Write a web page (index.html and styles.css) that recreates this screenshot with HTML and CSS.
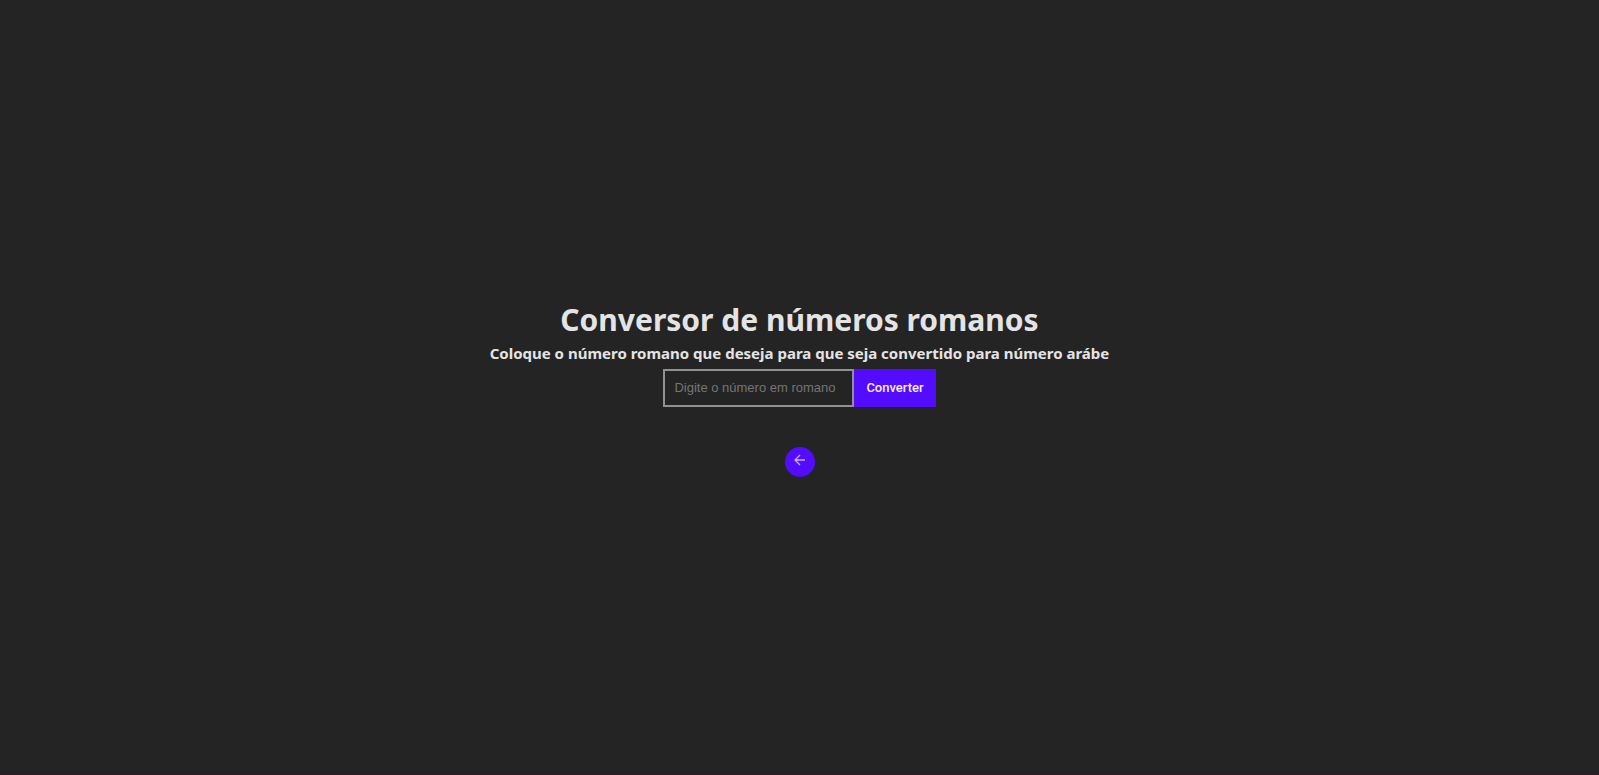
FILE: index.html
```html
<!DOCTYPE html>
<html lang="pt-BR">
<head>
<meta charset="utf-8">
<meta name="viewport" content="width=device-width, initial-scale=1">
<title>Conversor de números romanos</title>
<link rel="stylesheet" href="styles.css">
</head>
<body>
<main class="converter">
  <h1 class="title">Conversor de números romanos</h1>
  <h2 class="subtitle">Coloque o número romano que deseja para que seja convertido para número arábe</h2>
  <form class="form">
    <input class="field" type="text" aria-label="Número romano" placeholder="Digite o número em romano">
    <button class="submit" type="button">Converter</button>
  </form>
  <a class="back" href="#" aria-label="Voltar">
    <svg class="back-icon" viewBox="0 0 16 16" aria-hidden="true"><path d="M13 8H3M8 3L3 8l5 5"/></svg>
  </a>
</main>
</body>
</html>
```
FILE: styles.css
```css
* {
  box-sizing: border-box;
  margin: 0;
  padding: 0;
}

body {
  min-height: 100vh;
  display: flex;
  background: #242424;
  color: #e4e4e4;
  border-bottom: 2px solid #281e24;
  font-family: "Segoe UI", "Noto Sans", "Open Sans", sans-serif;
}

.converter {
  flex: 1;
  display: flex;
  flex-direction: column;
  align-items: center;
  justify-content: center;
  text-align: center;
}

.title {
  font-size: 30px;
  line-height: 46px;
  font-weight: 700;
}

.subtitle {
  font-size: 15px;
  line-height: 20px;
  font-weight: 700;
  margin-bottom: 6px;
}

.form {
  display: flex;
}

.field {
  width: 191px;
  height: 38px;
  padding: 0 9px;
  border: 2px solid #929292;
  border-radius: 0;
  background: transparent;
  color: #e4e4e4;
  font-family: "Liberation Sans", Arial, sans-serif;
  font-size: 13px;
}

.field::placeholder {
  color: #757575;
}

.submit {
  height: 38px;
  padding: 0 12px;
  border: 0;
  background: #540cff;
  color: #f4f0ff;
  font-family: Roboto, sans-serif;
  font-size: 13px;
  font-weight: 500;
}

.back {
  display: flex;
  justify-content: center;
  width: 30px;
  height: 30px;
  margin-top: 40px;
  padding-top: 5px;
  border-radius: 50%;
  background: #540cff;
}

.back-icon {
  width: 16px;
  height: 16px;
  fill: none;
  stroke: #c8b0ff;
  stroke-width: 1.3;
}
```
